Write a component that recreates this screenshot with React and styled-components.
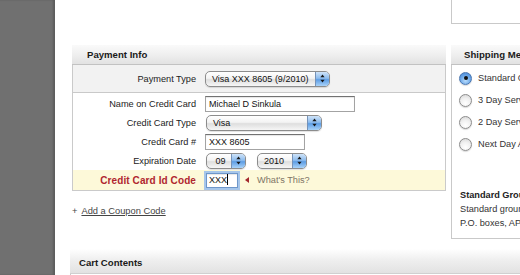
import styled, { createGlobalStyle } from 'styled-components'

const GlobalStyle = createGlobalStyle`
    html, body {
        margin: 0;
        padding: 0;
        background: #fff;
    }
    body {
        font-family: "Liberation Sans", Arial, Helvetica, sans-serif;
        color: #333;
    }
`;

const Page = styled.div`
    display: flex;
    width: 520px;
    height: 275px;
    overflow: hidden;
`;

const Sidebar = styled.div`
    width: 55px;
    flex-shrink: 0;
    background: #707070;
    box-shadow: inset -2px 0 2px rgba(0, 0, 0, 0.18);
`;

const Main = styled.div`
    flex: 1;
    min-width: 0;
    padding-left: 17px;
    display: flex;
    flex-direction: column;
`;

const Columns = styled.div`
    display: flex;
    gap: 5px;
    align-items: flex-start;
`;

const LeftCol = styled.div`
    width: 374px;
    flex-shrink: 0;
    padding-top: 45px;
`;

const RightCol = styled.div`
    width: 200px;
    flex-shrink: 0;
`;

const TopBox = styled.div`
    height: 24px;
    box-sizing: border-box;
    border: 1px solid #c9c9c9;
    border-top: none;
`;

const PanelHeader = styled.div`
    height: 20px;
    box-sizing: border-box;
    border-bottom: 1px solid #c2c2c2;
    background: linear-gradient(to bottom, #fafafa 0%, #efefef 50%, #e2e2e2 100%);
    padding-left: ${p => p.$pad}px;
    display: flex;
    align-items: center;
    font-size: 9.6px;
    font-weight: bold;
    color: #1a1a1a;
    white-space: nowrap;
    overflow: hidden;
`;

const PanelBody = styled.div`
    border: 1px solid #cacaca;
    border-top: none;
`;

const TypeRow = styled.div`
    display: grid;
    grid-template-columns: 123px 1fr;
    column-gap: 9px;
    align-items: center;
    height: 27px;
    background: #f2f2f2;
    border-bottom: 1px solid #c9c9c9;
`;

const Fields = styled.div`
    padding-top: 1px;
`;

const Row = styled.div`
    display: grid;
    grid-template-columns: 123px 1fr;
    column-gap: 9px;
    align-items: center;
    height: ${p => (p.$alert ? 20 : 19)}px;
    background: ${p => (p.$alert ? '#fdf9d9' : 'transparent')};
`;

const Label = styled.div`
    text-align: right;
    font-size: ${p => (p.$alert ? '10px' : '9.2px')};
    font-weight: ${p => (p.$alert ? 'bold' : 'normal')};
    letter-spacing: ${p => (p.$alert ? '0.1px' : '0')};
    color: ${p => (p.$alert ? '#b0262f' : '#222')};
    white-space: nowrap;
`;

const Controls = styled.div`
    display: flex;
    align-items: center;
    gap: ${p => p.$gap || 0}px;
`;

const Select = styled.div`
    display: flex;
    align-items: stretch;
    width: ${p => p.$w}px;
    height: 16px;
    box-sizing: border-box;
    margin-left: ${p => p.$shift || 0}px;
    border: 1px solid #8c8c8c;
    border-radius: 5px;
    overflow: hidden;
    background: linear-gradient(to bottom, #ffffff 0%, #f3f3f3 45%, #dedede 55%, #f6f6f6 100%);
    box-shadow: 0 1px 1px rgba(0, 0, 0, 0.12);
`;

const SelectText = styled.span`
    flex: 1;
    padding-left: 6px;
    font-size: 9px;
    line-height: 14px;
    color: #111;
    white-space: nowrap;
    overflow: hidden;
`;

const SelectCap = styled.span`
    width: 13px;
    display: flex;
    align-items: center;
    justify-content: center;
    border-left: 1px solid #7592b8;
    background: linear-gradient(to bottom, #cfe3f8 0%, #8dbcee 45%, #5d9de4 55%, #a9d2f8 100%);
`;

const TextBox = styled.div`
    width: ${p => p.$w}px;
    height: 16px;
    box-sizing: border-box;
    border: 1px solid #a3a3a3;
    border-top-color: #727272;
    box-shadow: inset 0 1px 1px rgba(0, 0, 0, 0.1);
    padding: 0 3px;
    font-size: 9px;
    line-height: 14px;
    color: #111;
    white-space: nowrap;
    background: #fff;
`;

const FocusBox = styled(TextBox)`
    height: 15px;
    margin-left: 1px;
    border: 1px solid #6e97ca;
    box-shadow: 0 0 0 2px #a6c6ea, inset 0 1px 1px rgba(0, 0, 0, 0.1);
    line-height: 13px;
    padding-left: 2px;
`;

const Caret = styled.span`
    display: inline-block;
    width: 1px;
    height: 11px;
    background: #000;
    vertical-align: -2px;
`;

const Pointer = styled.span`
    width: 0;
    height: 0;
    margin-left: 7px;
    border-top: 3px solid transparent;
    border-bottom: 3px solid transparent;
    border-right: 4px solid #a3272d;
`;

const Help = styled.span`
    margin-left: 8px;
    font-size: 9.2px;
    color: #7d7465;
`;

const Coupon = styled.div`
    margin-top: 14px;
    font-size: 9.3px;
    color: #444;
    line-height: 12px;

    a {
        color: #444;
        margin-left: 4px;
        text-decoration: underline;
    }
`;

const Shipping = styled.div`
    margin-top: 21px;
`;

const ShipBody = styled.div`
    border-left: 1px solid #c9c9c9;
    border-bottom: 1px solid #c9c9c9;
    padding: 2px 0 8px 7px;
`;

const Option = styled.div`
    display: flex;
    align-items: center;
    gap: 6px;
    height: 22px;
    font-size: 9.2px;
    color: #333;
    white-space: nowrap;
`;

const Radio = styled.span`
    width: 13px;
    height: 13px;
    box-sizing: border-box;
    border-radius: 50%;
    flex-shrink: 0;
    display: flex;
    align-items: center;
    justify-content: center;
    border: 1px solid ${p => (p.$on ? '#4a76b0' : '#8c8c8c')};
    background: ${p =>
        p.$on
            ? 'radial-gradient(circle at 50% 70%, #b9dcfb 0%, #6aa6e8 55%, #3f7fcf 100%)'
            : 'radial-gradient(circle at 50% 75%, #ffffff 0%, #f0f0f0 50%, #d2d2d2 100%)'};
    box-shadow: 0 1px 1px rgba(0, 0, 0, 0.15);

    &::after {
        content: '';
        display: ${p => (p.$on ? 'block' : 'none')};
        width: 4px;
        height: 4px;
        border-radius: 50%;
        background: #111;
    }
`;

const Desc = styled.div`
    margin-top: 33px;
    padding-left: 1px;
    font-size: 9.2px;
    line-height: 14px;
    color: #333;
    white-space: nowrap;
`;

const DescTitle = styled.div`
    font-weight: bold;
    color: #222;
`;

const Cart = styled.div`
    margin-top: 10px;
    margin-left: -2px;
    flex: 1;
    display: flex;
    flex-direction: column;
`;

const CartHeader = styled.div`
    height: 25px;
    box-sizing: border-box;
    padding: 8px 0 0 9px;
    background: linear-gradient(to bottom, #ffffff 0%, #efefef 45%, #e2e2e2 100%);
    border-bottom: 1px solid #d0d0d0;
    font-size: 9.6px;
    font-weight: bold;
    line-height: 12px;
    color: #1a1a1a;
`;

const CartBody = styled.div`
    flex: 1;
    border-left: 1px solid #cacaca;
`;

const Arrows = () => (
    <svg width="5" height="9" viewBox="0 0 5 9">
        <path d="M2.5 0.5 L4.6 3.3 L0.4 3.3 Z" fill="#151515" />
        <path d="M2.5 8.5 L4.6 5.7 L0.4 5.7 Z" fill="#151515" />
    </svg>
);

const Dropdown = ({ w, shift, children }) => (
    <Select $w={w} $shift={shift}>
        <SelectText>{children}</SelectText>
        <SelectCap><Arrows /></SelectCap>
    </Select>
);

const shippingOptions = [
    { label: 'Standard Ground', on: true },
    { label: '3 Day Service', on: false },
    { label: '2 Day Service', on: false },
    { label: 'Next Day Air', on: false },
];

const App = () => {
    return (
        <>
            <GlobalStyle />
            <Page>
                <Sidebar />
                <Main>
                    <Columns>
                        <LeftCol>
                            <PanelHeader $pad={15}>Payment Info</PanelHeader>
                            <PanelBody>
                                <TypeRow>
                                    <Label>Payment Type</Label>
                                    <Controls>
                                        <Dropdown w={125}>Visa XXX 8605 (9/2010)</Dropdown>
                                    </Controls>
                                </TypeRow>
                                <Fields>
                                    <Row>
                                        <Label>Name on Credit Card</Label>
                                        <Controls>
                                            <TextBox $w={150}>Michael D Sinkula</TextBox>
                                        </Controls>
                                    </Row>
                                    <Row>
                                        <Label>Credit Card Type</Label>
                                        <Controls>
                                            <Dropdown w={116} shift={1}>Visa</Dropdown>
                                        </Controls>
                                    </Row>
                                    <Row>
                                        <Label>Credit Card #</Label>
                                        <Controls>
                                            <TextBox $w={100}>XXX 8605</TextBox>
                                        </Controls>
                                    </Row>
                                    <Row>
                                        <Label>Expiration Date</Label>
                                        <Controls $gap={11}>
                                            <Dropdown w={40} shift={1}>&nbsp;09</Dropdown>
                                            <Dropdown w={50}>2010</Dropdown>
                                        </Controls>
                                    </Row>
                                    <Row $alert>
                                        <Label $alert>Credit Card Id Code</Label>
                                        <Controls>
                                            <FocusBox $w={32}>XXX<Caret /></FocusBox>
                                            <Pointer />
                                            <Help>What&apos;s This?</Help>
                                        </Controls>
                                    </Row>
                                </Fields>
                            </PanelBody>
                            <Coupon>+<a href="#coupon">Add a Coupon Code</a></Coupon>
                        </LeftCol>
                        <RightCol>
                            <TopBox />
                            <Shipping>
                                <PanelHeader $pad={13}>Shipping Method</PanelHeader>
                                <ShipBody>
                                    {shippingOptions.map(opt => (
                                        <Option key={opt.label}>
                                            <Radio $on={opt.on} />
                                            {opt.label}
                                        </Option>
                                    ))}
                                    <Desc>
                                        <DescTitle>Standard Ground</DescTitle>
                                        <div>Standard ground shipping</div>
                                        <div>P.O. boxes, APO/FPO</div>
                                    </Desc>
                                </ShipBody>
                            </Shipping>
                        </RightCol>
                    </Columns>
                    <Cart>
                        <CartHeader>Cart Contents</CartHeader>
                        <CartBody />
                    </Cart>
                </Main>
            </Page>
        </>
    )
}

export default App
